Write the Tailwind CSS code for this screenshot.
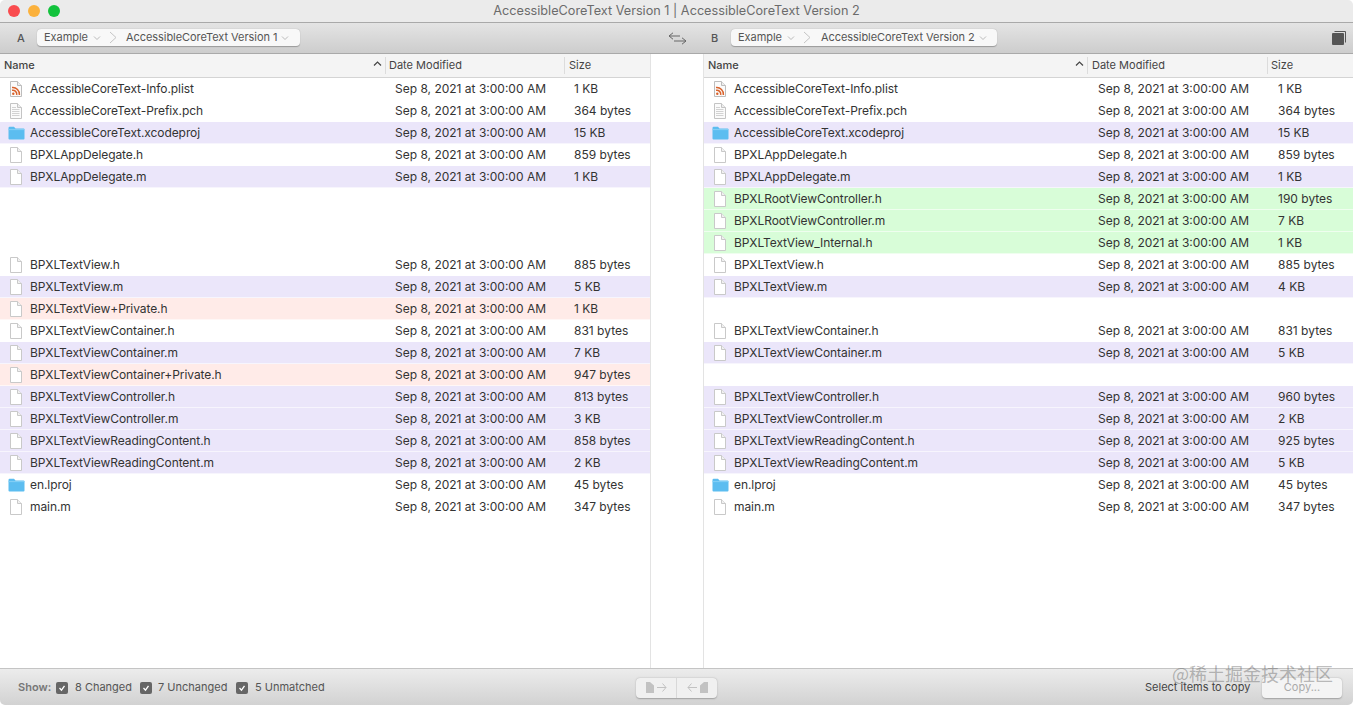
<!doctype html>
<html lang="en">
<head>
  <meta charset="UTF-8" />
  <title>AccessibleCoreText Version 1 | AccessibleCoreText Version 2</title>
  <script src="https://cdn.jsdelivr.net/npm/@tailwindcss/browser@4"></script>
</head>
<body class="bg-white">
  <!-- Shared file icons -->
  <svg class="hidden" aria-hidden="true">
    <symbol id="doc" viewBox="0 0 13 16">
      <path d="M1.5 .5H8.5L12.5 4.5V15.5H1.5Z" fill="#fff" stroke="#c9c9c9" />
      <path d="M8.5 .5V4.5H12.5" fill="#f1f1f1" stroke="#c9c9c9" />
    </symbol>
    <symbol id="pch" viewBox="0 0 13 16">
      <path d="M1.5 .5H8.5L12.5 4.5V15.5H1.5Z" fill="#fbfbfb" stroke="#c4c4c4" />
      <path d="M8.5 .5V4.5H12.5" fill="#eee" stroke="#c4c4c4" />
      <path d="M3 4.5H7M3 6.5H10.5M3 8.5H10.5M3 10.5H10.5M3 12.5H10.5" stroke="#d2d2d2" />
    </symbol>
    <symbol id="rss" viewBox="0 0 13 16">
      <path d="M1.5 .5H8.5L12.5 4.5V15.5H1.5Z" fill="#fbfbfb" stroke="#bdbdbd" />
      <path d="M8.5 .5V4.5H12.5" fill="#eee" stroke="#bdbdbd" />
      <circle cx="4.3" cy="12.7" r="1.2" fill="#d9622b" />
      <path d="M3 9.3A4 4 0 0 1 7.7 14M3 6.6A6.7 6.7 0 0 1 10.4 14" fill="none" stroke="#d9622b" stroke-width="1.5" />
    </symbol>
    <symbol id="folder" viewBox="0 0 17 14">
      <path d="M.5 2A1.2 1.2 0 0 1 1.7 .8H6L7.5 2.4H15.5A1 1 0 0 1 16.5 3.4V12.6A1 1 0 0 1 15.5 13.6H1.5A1 1 0 0 1 .5 12.6Z" fill="#5cbdf0" />
      <path d="M.5 3.6H16.5" stroke="#86d0f6" />
    </symbol>
  </svg>

  <div class="relative flex h-[705px] w-[1353px] flex-col overflow-hidden rounded-[5px] bg-white font-['Inter',sans-serif] text-[12px] text-[#333]">
    <!-- Title bar -->
    <header class="relative flex h-[23px] shrink-0 items-center justify-center border-b border-[#a9a9a9] bg-[#ebebeb] text-[12.7px] text-[#6b6b6b]">
      <div class="absolute left-[8px] top-[5px] flex gap-[8px]">
        <span class="size-[12px] rounded-full bg-[#f94b4e]"></span>
        <span class="size-[12px] rounded-full bg-[#fbb13c]"></span>
        <span class="size-[12px] rounded-full bg-[#12c23c]"></span>
      </div>
      AccessibleCoreText Version 1 | AccessibleCoreText Version 2
    </header>

    <!-- Toolbar with the two path controls -->
    <div class="flex h-[31px] shrink-0 items-center border-b border-[#a9a9a9] bg-gradient-to-b from-[#e4e4e4] to-[#cdcdcd] text-[11px] text-[#555]">
      <span class="ml-[17px] w-[20px] font-medium">A</span>
      <div class="mb-[1px] flex h-[17px] w-[263px] items-center rounded-[4px] bg-[#f8f8f8] pl-[7px] tracking-[-0.05px] shadow-[0_0.5px_1px_#9a9a9a]">
        <span>Example</span>
        <svg class="ml-[5px] size-[8px]" viewBox="0 0 8 8"><path d="M1 2.5L4 5.5L7 2.5" fill="none" stroke="#bbb" /></svg>
        <svg class="ml-[8px] h-[13px] w-[8px]" viewBox="0 0 8 13"><path d="M1 1L7 6.5L1 12" fill="none" stroke="#c4c4c4" /></svg>
        <span class="ml-[9px]">AccessibleCoreText Version 1</span>
        <svg class="ml-[4px] size-[8px]" viewBox="0 0 8 8"><path d="M1 2.5L4 5.5L7 2.5" fill="none" stroke="#bbb" /></svg>
      </div>
      <svg class="ml-[368px] h-[13px] w-[19px]" viewBox="0 0 19 13"><path d="M12 4H1M5 .8L1 4L5 7.2M6 9H18M14 5.8L18 9L14 12.2" fill="none" stroke="#666" /></svg>
      <span class="ml-[24px] w-[20px] font-medium">B</span>
      <div class="mb-[1px] flex h-[17px] w-[266px] items-center rounded-[4px] bg-[#f8f8f8] pl-[7px] tracking-[-0.05px] shadow-[0_0.5px_1px_#9a9a9a]">
        <span>Example</span>
        <svg class="ml-[5px] size-[8px]" viewBox="0 0 8 8"><path d="M1 2.5L4 5.5L7 2.5" fill="none" stroke="#bbb" /></svg>
        <svg class="ml-[8px] h-[13px] w-[8px]" viewBox="0 0 8 13"><path d="M1 1L7 6.5L1 12" fill="none" stroke="#c4c4c4" /></svg>
        <span class="ml-[10px]">AccessibleCoreText Version 2</span>
        <svg class="ml-[4px] size-[8px]" viewBox="0 0 8 8"><path d="M1 2.5L4 5.5L7 2.5" fill="none" stroke="#bbb" /></svg>
      </div>
      <svg class="ml-[334px] size-[16px]" viewBox="0 0 16 16"><path d="M3.5 1.5H14.5V12.5" fill="none" stroke="#555" /><rect x="1" y="3" width="12" height="12" rx="1" fill="#555" /></svg>
    </div>

    <!-- Panes -->
    <main class="flex min-h-0 flex-1">
      <section class="flex w-[650px] shrink-0 flex-col">
        <div class="grid h-[24px] shrink-0 grid-cols-[385px_179px_1fr] items-center border-b border-[#d4d4d4] bg-[#f4f4f4] text-[11px] font-medium text-[#444]">
          <div class="relative pl-[4px]">Name<svg class="absolute right-[3px] top-[3px] h-[7px] w-[9px]" viewBox="0 0 9 7"><path d="M1 5.5L4.5 2L8 5.5" fill="none" stroke="#444" stroke-width="1.2" /></svg></div>
          <div class="border-l border-[#dcdcdc] pl-[3px] font-normal">Date Modified</div>
          <div class="border-l border-[#dcdcdc] pl-[4px] font-normal">Size</div>
        </div>
        <div id="left-rows"></div>
      </section>
      <div class="w-[54px] shrink-0 border-x border-[#e3e3e3] bg-white"></div>
      <section class="flex min-w-0 flex-1 flex-col">
        <div class="grid h-[24px] shrink-0 grid-cols-[383px_180px_1fr] items-center border-b border-[#d4d4d4] bg-[#f4f4f4] text-[11px] font-medium text-[#444]">
          <div class="relative pl-[4px]">Name<svg class="absolute right-[3px] top-[3px] h-[7px] w-[9px]" viewBox="0 0 9 7"><path d="M1 5.5L4.5 2L8 5.5" fill="none" stroke="#444" stroke-width="1.2" /></svg></div>
          <div class="border-l border-[#dcdcdc] pl-[4px] font-normal">Date Modified</div>
          <div class="border-l border-[#dcdcdc] pl-[3px] font-normal">Size</div>
        </div>
        <div id="right-rows"></div>
      </section>
    </main>

    <!-- Footer -->
    <footer class="relative flex h-[37px] shrink-0 items-center border-t border-[#c4c4c4] bg-gradient-to-b from-[#ececec] to-[#d2d2d2] pt-[1px] text-[11px] text-[#555]">
      <span class="ml-[18px] w-[38px] font-semibold text-[#777]">Show:</span>
      <span class="flex size-[12px] items-center justify-center rounded-[2px] bg-[#666]"><svg class="size-[10px]" viewBox="0 0 10 10"><path d="M2.5 5L4.5 7.2L7.5 2.8" fill="none" stroke="#fff" stroke-width="1.3" /></svg></span>
      <span class="ml-[7px] w-[65px]">8 Changed</span>
      <span class="flex size-[12px] items-center justify-center rounded-[2px] bg-[#666]"><svg class="size-[10px]" viewBox="0 0 10 10"><path d="M2.5 5L4.5 7.2L7.5 2.8" fill="none" stroke="#fff" stroke-width="1.3" /></svg></span>
      <span class="ml-[6px] w-[78px]">7 Unchanged</span>
      <span class="flex size-[12px] items-center justify-center rounded-[2px] bg-[#666]"><svg class="size-[10px]" viewBox="0 0 10 10"><path d="M2.5 5L4.5 7.2L7.5 2.8" fill="none" stroke="#fff" stroke-width="1.3" /></svg></span>
      <span class="ml-[7px] w-[381px]">5 Unmatched</span>

      <div class="flex h-[20px] w-[81px] rounded-[4px] bg-[#f0f0f0] shadow-[0_0.5px_1.5px_#a0a0a0]">
        <div class="flex w-[41px] items-center justify-center border-r border-[#d8d8d8]">
          <svg class="h-[11px] w-[21px]" viewBox="0 0 21 11"><path d="M0 0H4L8 3.5V11H0Z" fill="#c2c2c2" /><path d="M11 5.5H20M16.5 1.5L20 5.5L16.5 9.5" fill="none" stroke="#c2c2c2" /></svg>
        </div>
        <div class="flex flex-1 items-center justify-center">
          <svg class="h-[11px] w-[21px]" viewBox="0 0 21 11"><path d="M21 0H17L13 3.5V11H21Z" fill="#c2c2c2" /><path d="M10 5.5H1M4.5 1.5L1 5.5L4.5 9.5" fill="none" stroke="#c2c2c2" /></svg>
        </div>
      </div>

      <span class="ml-[428px] w-[117px] text-[#444]">Select items to copy</span>
      <div class="flex h-[20px] w-[80px] items-center justify-center rounded-[4px] bg-[#f4f4f4] text-[#aaa] shadow-[0_0.5px_1.5px_#a0a0a0]">Copy...</div>
      <!-- Watermark -->
      <span class="absolute left-[1172px] top-[-7px] font-['Noto_Sans_CJK_SC',sans-serif] text-[18px] leading-[22px] text-[#555]/40">@稀土掘金技术社区</span>
    </footer>
  </div>

  <script>
    const rowTone = {
      none: "",
      changed: "bg-[#ebe6fa]",
      removed: "bg-[#ffebe8]",
      added: "bg-[#d8fdd8]",
    };
    const date = "Sep 8, 2021 at 3:00:00 AM";

    // name, size, tone, icon -- null is an empty row
    const leftRows = [
      ["AccessibleCoreText-Info.plist", "1 KB", "none", "rss"],
      ["AccessibleCoreText-Prefix.pch", "364 bytes", "none", "pch"],
      ["AccessibleCoreText.xcodeproj", "15 KB", "changed", "folder"],
      ["BPXLAppDelegate.h", "859 bytes", "none", "doc"],
      ["BPXLAppDelegate.m", "1 KB", "changed", "doc"],
      null, null, null,
      ["BPXLTextView.h", "885 bytes", "none", "doc"],
      ["BPXLTextView.m", "5 KB", "changed", "doc"],
      ["BPXLTextView+Private.h", "1 KB", "removed", "doc"],
      ["BPXLTextViewContainer.h", "831 bytes", "none", "doc"],
      ["BPXLTextViewContainer.m", "7 KB", "changed", "doc"],
      ["BPXLTextViewContainer+Private.h", "947 bytes", "removed", "doc"],
      ["BPXLTextViewController.h", "813 bytes", "changed", "doc"],
      ["BPXLTextViewController.m", "3 KB", "changed", "doc"],
      ["BPXLTextViewReadingContent.h", "858 bytes", "changed", "doc"],
      ["BPXLTextViewReadingContent.m", "2 KB", "changed", "doc"],
      ["en.lproj", "45 bytes", "none", "folder"],
      ["main.m", "347 bytes", "none", "doc"],
    ];
    const rightRows = [
      ["AccessibleCoreText-Info.plist", "1 KB", "none", "rss"],
      ["AccessibleCoreText-Prefix.pch", "364 bytes", "none", "pch"],
      ["AccessibleCoreText.xcodeproj", "15 KB", "changed", "folder"],
      ["BPXLAppDelegate.h", "859 bytes", "none", "doc"],
      ["BPXLAppDelegate.m", "1 KB", "changed", "doc"],
      ["BPXLRootViewController.h", "190 bytes", "added", "doc"],
      ["BPXLRootViewController.m", "7 KB", "added", "doc"],
      ["BPXLTextView_Internal.h", "1 KB", "added", "doc"],
      ["BPXLTextView.h", "885 bytes", "none", "doc"],
      ["BPXLTextView.m", "4 KB", "changed", "doc"],
      null,
      ["BPXLTextViewContainer.h", "831 bytes", "none", "doc"],
      ["BPXLTextViewContainer.m", "5 KB", "changed", "doc"],
      null,
      ["BPXLTextViewController.h", "960 bytes", "changed", "doc"],
      ["BPXLTextViewController.m", "2 KB", "changed", "doc"],
      ["BPXLTextViewReadingContent.h", "925 bytes", "changed", "doc"],
      ["BPXLTextViewReadingContent.m", "5 KB", "changed", "doc"],
      ["en.lproj", "45 bytes", "none", "folder"],
      ["main.m", "347 bytes", "none", "doc"],
    ];

    function iconHtml(icon) {
      if (icon === "folder") {
        return '<svg class="absolute left-[8px] top-[4px] h-[14px] w-[17px]"><use href="#folder"></use></svg>';
      }
      return `<svg class="absolute left-[9px] top-[3px] h-[16px] w-[13px]"><use href="#${icon}"></use></svg>`;
    }

    function renderRows(el, rows, gridClass) {
      el.innerHTML = rows.map((row) => {
        if (!row) return '<div class="h-[22px]"></div>';
        const [name, size, tone, icon] = row;
        return `<div class="relative grid h-[22px] ${gridClass} items-center border-b border-white/60 ${rowTone[tone]}">
          ${iconHtml(icon)}
          <span class="pl-[30px] tracking-[-0.08px]">${name}</span>
          <span class="pl-[10px]">${date}</span>
          <span class="pl-[10px]">${size}</span>
        </div>`;
      }).join("");
    }

    renderRows(document.getElementById("left-rows"), leftRows, "grid-cols-[385px_179px_1fr]");
    renderRows(document.getElementById("right-rows"), rightRows, "grid-cols-[384px_180px_1fr]");
  </script>
</body>
</html>
